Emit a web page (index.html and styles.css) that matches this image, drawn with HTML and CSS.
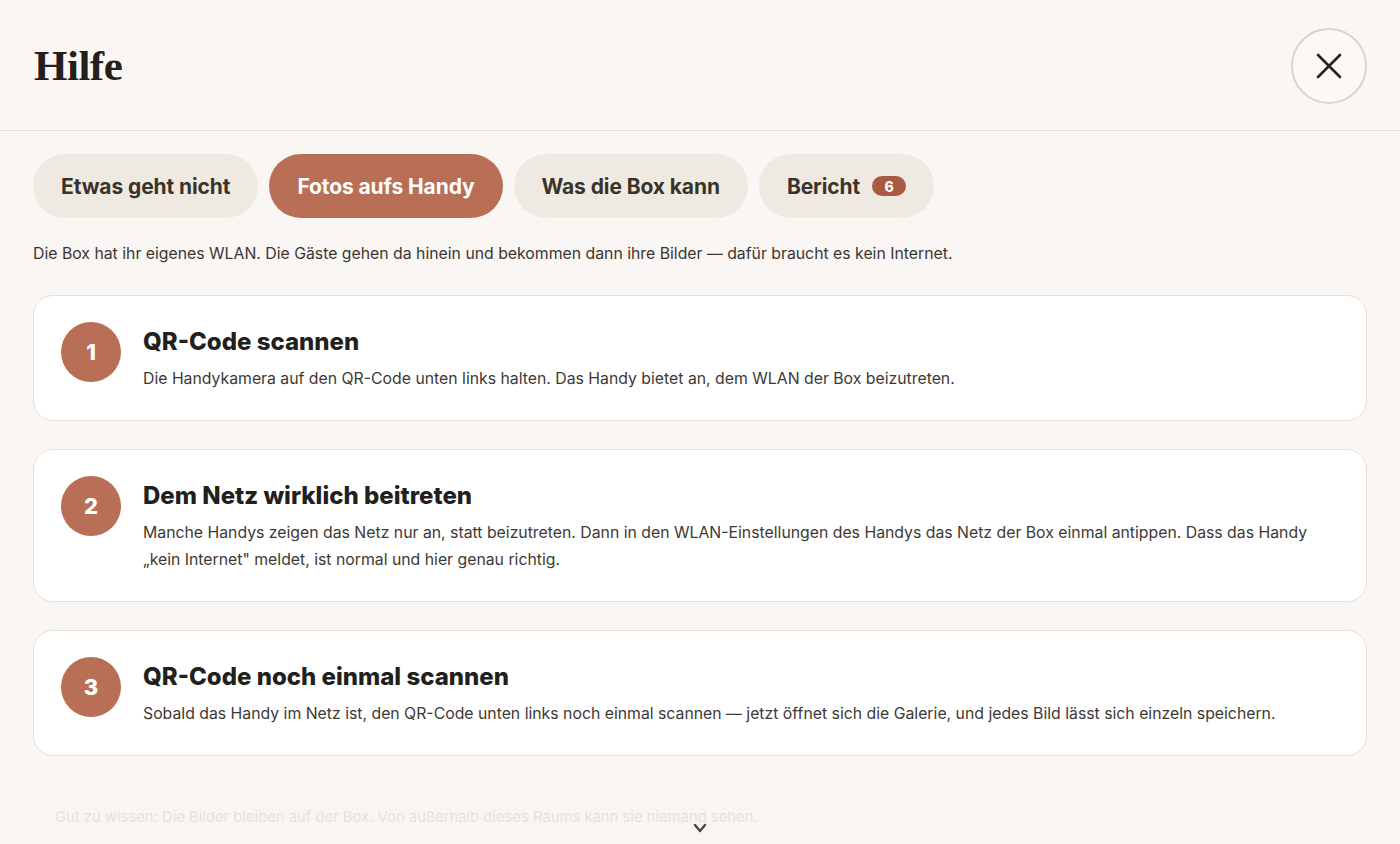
FILE: index.html
```html
<!DOCTYPE html>
<html lang="de">
<head>
<meta charset="utf-8">
<title>Hilfe</title>
<link rel="stylesheet" href="styles.css">
</head>
<body>
<div class="page">
  <header class="header">
    <h1 class="title">Hilfe</h1>
    <button class="close" aria-label="Schließen">
      <svg width="26" height="26" viewBox="0 0 26 26" fill="none" stroke="#26221e" stroke-width="2.6" stroke-linecap="round"><path d="M2 2 L24 24 M24 2 L2 24"/></svg>
    </button>
  </header>
  <main class="content">
    <nav class="tabs">
      <button class="tab">Etwas geht nicht</button>
      <button class="tab active">Fotos aufs Handy</button>
      <button class="tab">Was die Box kann</button>
      <button class="tab">Bericht <span class="badge">6</span></button>
    </nav>
    <p class="intro">Die Box hat ihr eigenes WLAN. Die Gäste gehen da hinein und bekommen dann ihre Bilder — dafür braucht es kein Internet.</p>
    <section class="steps">
      <article class="step">
        <div class="num">1</div>
        <div class="step-body">
          <h2>QR-Code scannen</h2>
          <p>Die Handykamera auf den QR-Code unten links halten. Das Handy bietet an, dem WLAN der Box beizutreten.</p>
        </div>
      </article>
      <article class="step">
        <div class="num">2</div>
        <div class="step-body">
          <h2>Dem Netz wirklich beitreten</h2>
          <p>Manche Handys zeigen das Netz nur an, statt beizutreten. Dann in den WLAN-Einstellungen des Handys das Netz der Box einmal antippen. Dass das Handy „kein Internet" meldet, ist normal und hier genau richtig.</p>
        </div>
      </article>
      <article class="step">
        <div class="num">3</div>
        <div class="step-body">
          <h2>QR-Code noch einmal scannen</h2>
          <p>Sobald das Handy im Netz ist, den QR-Code unten links noch einmal scannen — jetzt öffnet sich die Galerie, und jedes Bild lässt sich einzeln speichern.</p>
        </div>
      </article>
      <div class="tip">Gut zu wissen: Die Bilder bleiben auf der Box. Von außerhalb dieses Raums kann sie niemand sehen.</div>
    </section>
  </main>
  <div class="fade">
    <svg class="chev" width="14" height="10" viewBox="0 0 14 10" fill="none" stroke="#4a4540" stroke-width="2.4" stroke-linecap="round" stroke-linejoin="round"><path d="M2 2 L7 8 L12 2"/></svg>
  </div>
</div>
</body>
</html>
```

FILE: styles.css
```css
* { box-sizing: border-box; }
html, body {
  margin: 0;
  padding: 0;
  height: 100%;
  overflow: hidden;
  background: #faf6f3;
}
body {
  font-family: Inter, "Noto Sans", sans-serif;
  color: #2a2622;
}
.page {
  position: relative;
  height: 844px;
  overflow: hidden;
}
.header {
  height: 131px;
  display: flex;
  align-items: center;
  justify-content: space-between;
  padding: 0 33px 0 34px;
  border-bottom: 1px solid #e6ddd3;
}
.title {
  margin: 0;
  font-family: "Liberation Serif", "DejaVu Serif", serif;
  font-weight: 700;
  font-size: 43px;
  letter-spacing: -0.5px;
  color: #231f1c;
}
.close {
  width: 76px;
  height: 76px;
  border-radius: 50%;
  border: 2px solid #ddd4c6;
  background: #fbf8f5;
  display: flex;
  align-items: center;
  justify-content: center;
  padding: 0;
  margin-top: 1px;
}
.content {
  padding: 23px 33px 0 33px;
}
.tabs {
  display: flex;
  gap: 11px;
}
.tab {
  height: 64px;
  border: none;
  border-radius: 32px;
  background: #efeae1;
  color: #3a332b;
  font-family: Inter, "Noto Sans", sans-serif;
  font-size: 21px;
  font-weight: 700;
  letter-spacing: -0.1px;
  padding: 0 28px;
  display: flex;
  align-items: center;
  gap: 12px;
}
.tab.active {
  background: #b86f56;
  color: #ffffff;
}
.badge {
  display: inline-flex;
  align-items: center;
  justify-content: center;
  min-width: 34px;
  height: 20px;
  border-radius: 10px;
  background: #a85b42;
  color: #fff;
  font-size: 14px;
  font-weight: 800;
  letter-spacing: 0;
}
.intro {
  margin: 25px 0 30px 0;
  font-size: 15.8px;
  line-height: 22px;
  color: #3a3632;
}
.steps {
  display: flex;
  flex-direction: column;
  gap: 28px;
}
.step {
  display: flex;
  align-items: flex-start;
  gap: 22px;
  background: #ffffff;
  border: 1px solid #e7e0d6;
  border-radius: 20px;
  padding: 31px 28px 28px 27px;
}
.num {
  flex: 0 0 60px;
  width: 60px;
  height: 60px;
  margin-top: -5px;
  border-radius: 50%;
  background: #b86f56;
  color: #fff;
  font-size: 22px;
  font-weight: 800;
  display: flex;
  align-items: center;
  justify-content: center;
}
.step-body h2 {
  margin: 0;
  font-size: 24px;
  line-height: 30px;
  font-weight: 800;
  letter-spacing: 0;
  color: #221f1c;
}
.step-body p {
  margin: 8px 0 0 0;
  font-size: 15.8px;
  line-height: 27px;
  color: #3d3935;
}
.tip {
  background: #f6efe6;
  border-radius: 20px;
  padding: 22px 22px 40px 22px;
  font-size: 14.8px;
  line-height: 22px;
  color: #7d6e5e;
}
.fade {
  position: absolute;
  left: 0;
  right: 0;
  bottom: 0;
  height: 90px;
  background: linear-gradient(to bottom, rgba(250,246,243,0) 0%, rgba(250,246,243,0.82) 35%, rgba(250,246,243,0.85) 100%);
  display: flex;
  justify-content: center;
  align-items: flex-end;
  padding-bottom: 11px;
}
```
